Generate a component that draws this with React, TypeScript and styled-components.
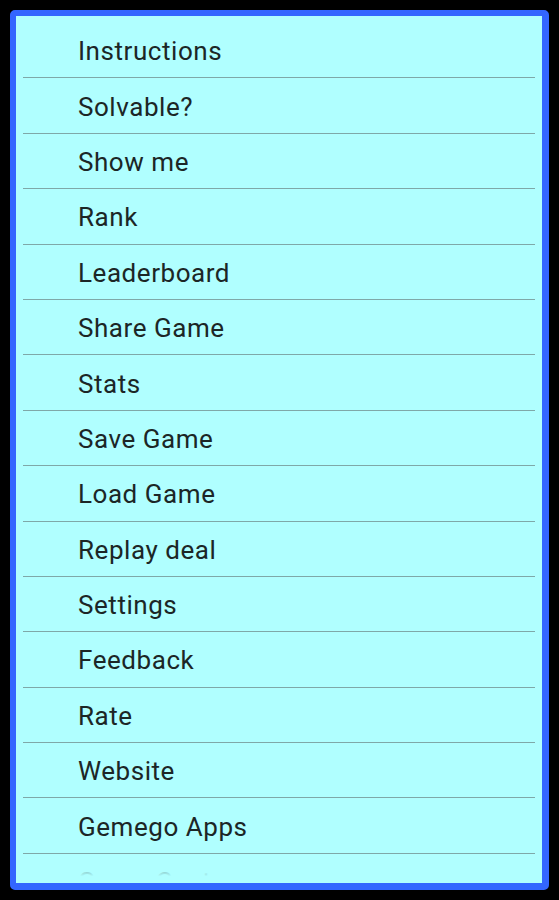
import styled, { createGlobalStyle } from "styled-components";

const items = [
    "Instructions",
    "Solvable?",
    "Show me",
    "Rank",
    "Leaderboard",
    "Share Game",
    "Stats",
    "Save Game",
    "Load Game",
    "Replay deal",
    "Settings",
    "Feedback",
    "Rate",
    "Website",
    "Gemego Apps",
    "Game Center",
];

const App = () => {
    return (
        <>
            <GlobalStyle />
            <Screen>
                <Frame>
                    <Menu>
                        {items.map((label) => (
                            <MenuRow key={label}>
                                <MenuLabel>{label}</MenuLabel>
                            </MenuRow>
                        ))}
                    </Menu>
                    {/* list fading edge at the bottom */}
                    <FadeEdge />
                </Frame>
            </Screen>
        </>
    );
};

export default App;

const GlobalStyle = createGlobalStyle`
    html, body {
        margin: 0;
        padding: 0;
        background: #000;
    }
`;

const Screen = styled.div`
    width: 559px;
    height: 900px;
    padding: 10px;
    box-sizing: border-box;
    background: #000;
`;

const Frame = styled.div`
    position: relative;
    width: 539px;
    height: 880px;
    box-sizing: border-box;
    border-style: solid;
    border-color: #3366ff;
    border-width: 6px 7px 7px 6px;
    border-radius: 5px;
    background: #b0ffff;
    overflow: hidden;
`;

const Menu = styled.ul`
    list-style: none;
    margin: 0;
    padding: 7px 7px 0 7px;
`;

const MenuRow = styled.li`
    height: 55.4px;
    box-sizing: border-box;
    border-bottom: 1px solid #7fa8a8;
    display: flex;
    align-items: center;
    padding-left: 55px;
    padding-top: 2px;
`;

const MenuLabel = styled.span`
    font-family: Roboto, "Noto Sans", sans-serif;
    font-size: 26px;
    letter-spacing: 0.55px;
    color: #1c2626;
    line-height: 1;
`;

const FadeEdge = styled.div`
    position: absolute;
    left: 0;
    right: 0;
    bottom: 0;
    height: 27px;
    background: linear-gradient(
        to bottom,
        rgba(176, 255, 255, 0) 0%,
        rgba(176, 255, 255, 0.75) 55%,
        rgba(176, 255, 255, 1) 75%
    );
    pointer-events: none;
`;
